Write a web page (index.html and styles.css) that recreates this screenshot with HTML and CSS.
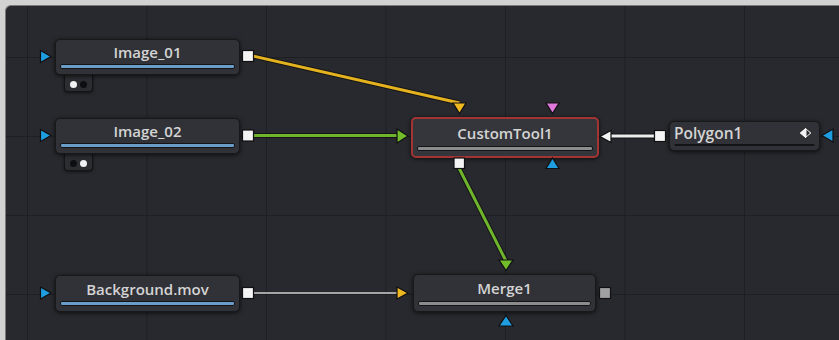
FILE: index.html
```html
<!DOCTYPE html>
<html lang="en">
<head>
  <meta charset="UTF-8"/>
  <meta name="viewport" content="width=device-width, initial-scale=1.0"/>
  <title>Node Graph</title>
  <link rel="stylesheet" href="styles.css">
</head>
<body>
  <div class="frame">
    <div class="graph">
      <svg class="wires" width="834" height="335" viewBox="0 0 834 335">
        <!-- wires -->
        <line class="wire-edge" x1="248" y1="51" x2="454.5" y2="98"/>
        <line class="wire yellow" x1="248" y1="51" x2="454.5" y2="98"/>
        <line class="wire-edge" x1="248" y1="130.5" x2="393" y2="130.5"/>
        <line class="wire green" x1="248" y1="130.5" x2="393" y2="130.5"/>
        <line class="wire-edge" x1="454" y1="163" x2="501" y2="256"/>
        <line class="wire green" x1="454" y1="163" x2="501" y2="256"/>
        <line class="wire thin" x1="248" y1="288" x2="393" y2="288"/>
        <line class="wire-edge" x1="604" y1="131" x2="650" y2="131"/>
        <line class="wire white" x1="604" y1="131" x2="650" y2="131"/>

        <!-- Image_01 -->
        <polygon class="port blue" points="35.5,45.5 46,51.5 35.5,57.5"/>
        <rect class="port white" x="237.5" y="45.5" width="11" height="11"/>
        <!-- Image_02 -->
        <polygon class="port blue" points="35.5,124.5 46,130.5 35.5,136.5"/>
        <rect class="port white" x="237.5" y="125" width="11" height="11"/>
        <!-- Background.mov -->
        <polygon class="port blue" points="35.5,282 46,288 35.5,294"/>
        <rect class="port white" x="237.5" y="282.5" width="11" height="11"/>

        <!-- CustomTool1 -->
        <polygon class="port yellow" points="448,98 461,98 454.5,108.5"/>
        <polygon class="port pink" points="541,98 554,98 547.5,108.5"/>
        <polygon class="port green" points="392,124 403,131 392,138"/>
        <rect class="port white" x="449" y="153" width="10.5" height="10.5"/>
        <polygon class="port blue" points="541,163.5 554,163.5 547.5,153"/>
        <polygon class="port white" points="595,131.5 606,125.5 606,137.5"/>

        <!-- Polygon1 -->
        <rect class="port white" x="649.5" y="125.5" width="11" height="11"/>
        <polygon class="port blue" points="817,130.5 828,124 828,137"/>

        <!-- Merge1 -->
        <polygon class="port green" points="494,255 508,255 501,265.5"/>
        <polygon class="port yellow" points="392,282 403,288 392,294"/>
        <rect class="port grey" x="594.5" y="282.5" width="11" height="11"/>
        <polygon class="port blue" points="494,321 508,321 501,310.5"/>
      </svg>

      <div class="tab" style="left: 58px; top: 69px;">
        <span class="dot on"></span><span class="dot"></span>
      </div>
      <div class="tab" style="left: 58px; top: 148px;">
        <span class="dot"></span><span class="dot on"></span>
      </div>

      <div class="node" style="left: 49px; top: 33px; width: 185px; height: 36px;">
        <div class="title">Image_01</div>
        <div class="bar blue"></div>
      </div>
      <div class="node" style="left: 49px; top: 112px; width: 185px; height: 36px;">
        <div class="title">Image_02</div>
        <div class="bar blue"></div>
      </div>
      <div class="node" style="left: 49px; top: 269px; width: 185px; height: 37px;">
        <div class="title">Background.mov</div>
        <div class="bar blue"></div>
      </div>
      <div class="node selected" style="left: 405px; top: 111px; width: 188px; height: 41px;">
        <div class="title">CustomTool1</div>
        <div class="bar grey"></div>
      </div>
      <div class="node" style="left: 407px; top: 268px; width: 183px; height: 38px;">
        <div class="title">Merge1</div>
        <div class="bar grey"></div>
      </div>
      <div class="node compact" style="left: 663px; top: 115px; width: 151px; height: 30px;">
        <div class="title">
          <span>Polygon1</span>
          <svg class="keyframe" width="15" height="12" viewBox="0 0 15 12">
            <polygon points="7.5,0.5 14,6 7.5,11.5 1,6" fill="#f2f2f2" stroke="#111" stroke-width="0.8"/>
            <polygon points="8.5,2.8 12,6 8.5,9.2" fill="#2b2c30"/>
          </svg>
        </div>
        <div class="bar orange"></div>
      </div>
    </div>
  </div>
</body>
</html>
```

FILE: styles.css
```css
html, body {
  margin: 0;
  height: 100%;
  overflow: hidden;
}
body {
  background-color: #d2d2d2;
  font-family: "Open Sans", "DejaVu Sans", sans-serif;
}
.frame {
  padding: 5px 0 0 5px;
  height: 100%;
  box-sizing: border-box;
}
.graph {
  position: relative;
  height: 100%;
  background-color: #28292e;
  border-top: 1px solid #7a7a7c;
  border-left: 1px solid #7a7a7c;
  border-top-left-radius: 6px;
  box-sizing: border-box;
  background-image:
    linear-gradient(to right, #1e1f22 1px, transparent 1px),
    linear-gradient(to bottom, #1e1f22 1px, transparent 1px);
  background-size: 119.5px 79px;
  background-position: 21px 51px;
  overflow: hidden;
}
.wires {
  position: absolute;
  left: -1px;
  top: -1px;
  z-index: 2;
  pointer-events: none;
}
.wire-edge {
  stroke: #141416;
  stroke-width: 5;
}
.wire {
  stroke-width: 3;
}
.wire.yellow { stroke: #e4b21f; }
.wire.green { stroke: #6eb42c; }
.wire.white { stroke: #ececec; }
.wire.thin {
  stroke: #cfcfcf;
  stroke-width: 1.5;
}
.port {
  stroke: #101012;
  stroke-width: 1.2;
}
.port.blue { fill: #1e9ee0; }
.port.white { fill: #f4f4f4; }
.port.yellow { fill: #f0b820; }
.port.pink { fill: #e078dc; }
.port.green { fill: #72bd2a; }
.port.grey { fill: #a0a0a2; }

.node {
  position: absolute;
  z-index: 1;
  display: flex;
  flex-direction: column;
  padding: 0 4px 5px;
  box-sizing: border-box;
  background-color: #313237;
  border: 1px solid #17181a;
  border-radius: 5px;
  box-shadow: 0 1px 4px rgba(0, 0, 0, 0.7);
}
.node.selected {
  border: 2px solid #a33434;
  background-color: #35363b;
}
.title {
  flex: 1;
  display: flex;
  align-items: center;
  justify-content: center;
  color: #d4d4d4;
  font-size: 15px;
  font-weight: 600;
}
.compact .title {
  justify-content: space-between;
  padding: 0 2px 0 0;
  font-size: 15.5px;
}
.keyframe {
  display: block;
}
.bar {
  height: 3px;
  border-radius: 2px;
  border: 1px solid #141416;
}
.bar.blue { background-color: #6a9ec8; }
.bar.grey { background-color: #8c8c8e; }
.bar.orange { background-color: #b87d1c; }

.tab {
  position: absolute;
  z-index: 0;
  width: 29px;
  height: 17px;
  display: flex;
  align-items: center;
  justify-content: center;
  gap: 3px;
  padding-top: 2px;
  box-sizing: border-box;
  background-color: #2c2d31;
  border: 1px solid #141416;
  border-top: none;
  border-radius: 0 0 4px 4px;
  box-shadow: 0 1px 3px rgba(0, 0, 0, 0.6);
}
.dot {
  width: 7px;
  height: 7px;
  border-radius: 50%;
  background-color: #0e0e10;
}
.dot.on {
  background-color: #f2f2f2;
}
```
